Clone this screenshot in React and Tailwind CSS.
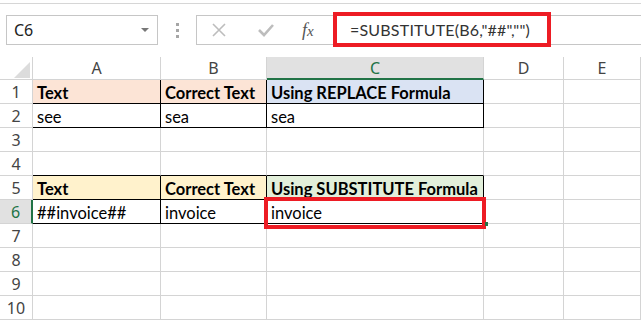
import React from "react";

const cols = [
  { key: "A", w: "w-[128px]" },
  { key: "B", w: "w-[106px]" },
  { key: "C", w: "w-[217px]" },
  { key: "D", w: "w-[80px]" },
  { key: "E", w: "flex-1" },
];

const cellFont = { fontFamily: "Lato, 'Open Sans', sans-serif" };
const uiFont = { fontFamily: "'Noto Sans', 'Open Sans', sans-serif" };

// table cells that carry data / black borders
const tableRows = {
  1: [
    { text: "Text", bg: "bg-[#fce4d6]", bold: true },
    { text: "Correct Text", bg: "bg-[#fce4d6]", bold: true },
    { text: "Using REPLACE Formula", bg: "bg-[#dae3f3]", bold: true },
  ],
  2: [{ text: "see" }, { text: "sea" }, { text: "sea" }],
  5: [
    { text: "Text", bg: "bg-[#fff2cc]", bold: true },
    { text: "Correct Text", bg: "bg-[#fff2cc]", bold: true },
    { text: "Using SUBSTITUTE Formula", bg: "bg-[#e2efda]", bold: true },
  ],
  6: [{ text: "##invoice##" }, { text: "invoice" }, { text: "invoice" }],
};

function Cell({ row, colIndex, col }) {
  const data = tableRows[row]?.[colIndex];
  const inTable = !!tableRows[row] && colIndex < 3;
  // black bottom edge under the table rows and above the second table
  const blackBottom = inTable || (row === 4 && colIndex < 3);
  return (
    <div
      className={`${col.w} h-[24px] shrink-0 border-b border-r flex items-center pt-[3px] pl-[4px] text-[16.5px] text-black leading-none whitespace-nowrap ${
        blackBottom ? "border-b-black" : "border-b-[#d4d4d4]"
      } ${inTable ? "border-r-black" : "border-r-[#d4d4d4]"} ${data?.bg || "bg-white"} ${
        data?.bold ? "font-bold" : ""
      }`}
      style={cellFont}
    >
      {data?.text}
    </div>
  );
}

export default function App() {
  const rows = [1, 2, 3, 4, 5, 6, 7, 8, 9, 10];
  return (
    <div className="w-[641px] h-[320px] bg-white overflow-hidden relative">
      <div className="h-[3px]" />
      <div className="h-[1px] bg-[#d6d6d6]" />
      {/* formula bar */}
      <div className="flex items-center h-[30px] mt-[11px]">
        <div
          className="ml-[6px] w-[152px] h-[30px] border border-[#c6c6c6] flex items-center justify-between pl-[7px] pr-[8px] text-[16px] text-[#222]"
          style={uiFont}
        >
          <span>C6</span>
          <span className="w-0 h-0 border-l-[4px] border-r-[4px] border-t-[4px] border-l-transparent border-r-transparent border-t-[#777]" />
        </div>
        <div className="w-[38px] flex flex-col items-center gap-[3px]">
          <span className="w-[3px] h-[3px] bg-[#a6a6a6]" />
          <span className="w-[3px] h-[3px] bg-[#a6a6a6]" />
          <span className="w-[3px] h-[3px] bg-[#a6a6a6]" />
        </div>
        <div className="flex-1 h-[30px] border border-r-0 border-[#c6c6c6] flex items-center">
          <svg width="16" height="16" viewBox="0 0 16 16" className="ml-[14px]">
            <path d="M2 2 L14 14 M14 2 L2 14" stroke="#bdbdbd" strokeWidth="1.6" />
          </svg>
          <svg width="18" height="16" viewBox="0 0 18 16" className="ml-[30px]">
            <path d="M2 8 L7 13 L16 3" stroke="#bdbdbd" strokeWidth="2.6" fill="none" />
          </svg>
          <span
            className="ml-[27px] text-[18px] italic text-[#555]"
            style={{ fontFamily: "'Liberation Serif', serif" }}
          >
            f<span className="text-[15px]">x</span>
          </span>
        </div>
      </div>
      {/* formula text, boxed in red */}
      <div
        className="absolute left-[333px] top-[12px] w-[218px] h-[35px] border-[4px] border-[#ed1c24] bg-white flex items-center pt-[1px] pl-[13px] text-[16px] tracking-[0.2px] text-[#333]"
        style={cellFont}
      >
        =SUBSTITUTE(B6,"##","")
      </div>

      {/* sheet */}
      <div className="mt-[12px]">
        <div className="flex h-[23px]">
          <div className="w-[33px] shrink-0 border-r border-b border-[#d4d4d4] relative">
            <svg width="16" height="16" viewBox="0 0 16 16" className="absolute left-[14px] top-[5px]">
              <polygon points="16,0 16,16 0,16" fill="#dcdcdc" />
            </svg>
          </div>
          {cols.map((c) => (
            <div
              key={c.key}
              className={`${c.w} shrink-0 flex items-center justify-center text-[16px] border-r ${
                c.key === "C"
                  ? "bg-[#e1e1e1] text-[#217346] border-b-2 border-b-[#217346] border-r-[#d4d4d4]"
                  : "text-[#444] border-b border-[#d4d4d4]"
              }`}
              style={uiFont}
            >
              {c.key}
            </div>
          ))}
        </div>
        {rows.map((r) => (
          <div key={r} className="flex">
            <div
              className={`w-[33px] h-[24px] shrink-0 flex items-center justify-center text-[16px] border-b border-b-[#d4d4d4] ${
                r === 6
                  ? "bg-[#e1e1e1] text-[#217346] border-r-2 border-r-[#217346]"
                  : "text-[#444] border-r border-r-[#d4d4d4]"
              }`}
              style={uiFont}
            >
              {r}
            </div>
            {cols.map((c, i) => (
              <Cell key={c.key} row={r} colIndex={i} col={c} />
            ))}
          </div>
        ))}
      </div>

      {/* active cell outline */}
      <div className="absolute left-[264px] top-[197px] w-[222px] h-[32px] border-[4px] border-[#ed1c24]" />
      <div className="absolute left-[485px] top-[222px] w-[3px] h-[4px] bg-[#217346]" />
    </div>
  );
}
